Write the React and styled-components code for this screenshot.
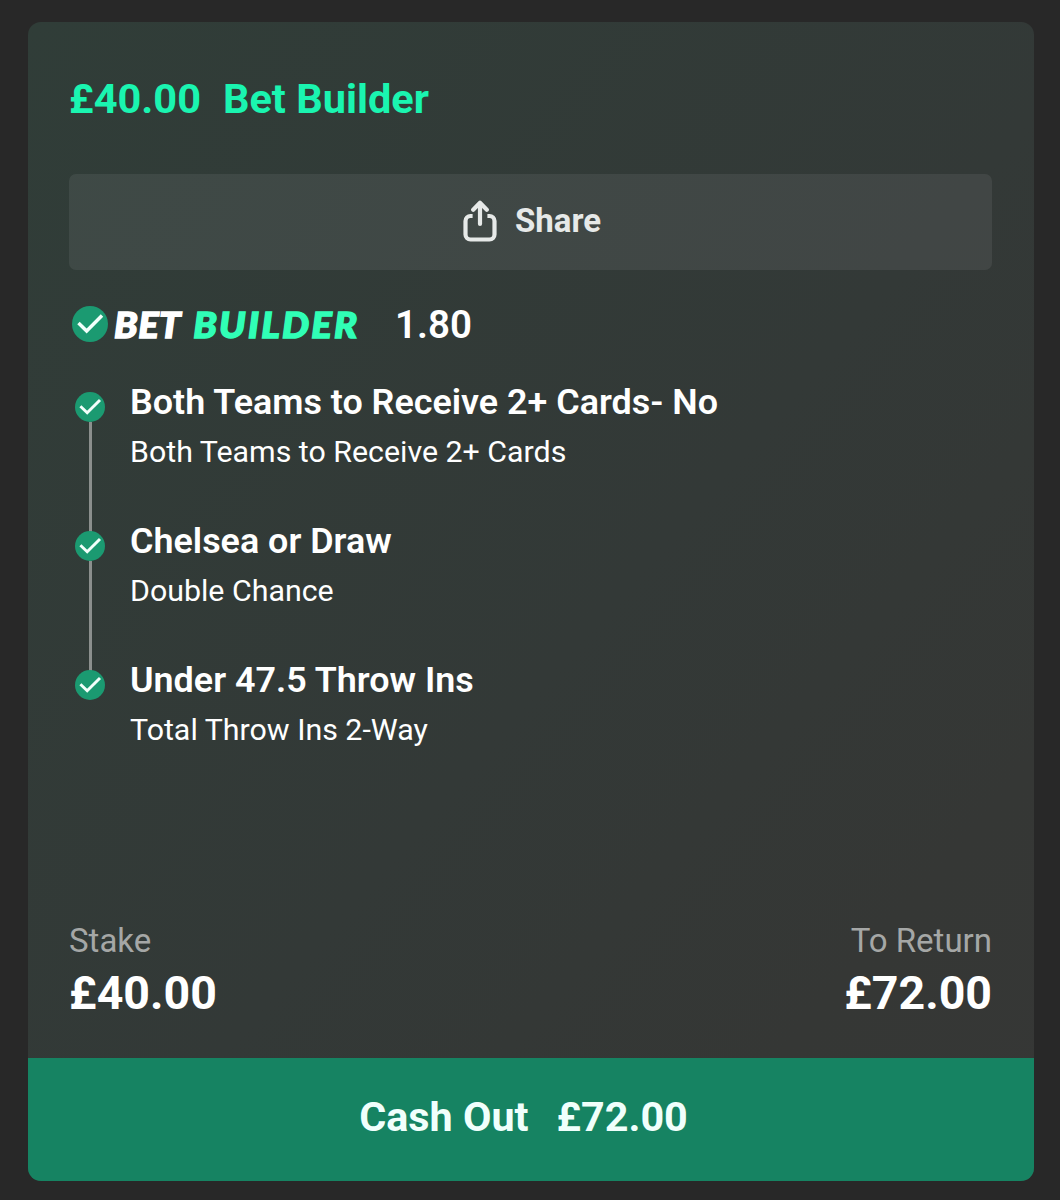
import React from "react";
import styled, { createGlobalStyle } from "styled-components";

const GlobalStyle = createGlobalStyle`
  * { box-sizing: border-box; }
  body {
    margin: 0;
    background: #282828;
    font-family: Roboto, "Liberation Sans", sans-serif;
  }
`;

const Page = styled.main`
  height: 1200px;
  padding: 22px 26.5px 19px 27.5px;
  background: #282828;
`;

const Card = styled.article`
  display: flex;
  flex-direction: column;
  height: 1159px;
  border-radius: 13px;
  overflow: hidden;
  background: linear-gradient(to bottom right, #303d38 0%, #333937 54%, #353735 82%, #363736 100%);
`;

const Body = styled.div`
  flex: 1;
  display: flex;
  flex-direction: column;
  padding: 52px 41.5px 0;
`;

const Heading = styled.h1`
  display: flex;
  gap: 22px;
  margin: 0 0 50px;
  font-size: 41.5px;
  line-height: 50px;
  font-weight: 700;
  color: #1af5b0;
`;

const ShareButton = styled.button`
  display: flex;
  align-items: center;
  justify-content: center;
  gap: 18px;
  flex: none;
  height: 96px;
  padding: 0 0 2px 3px;
  border: 0;
  border-radius: 7px;
  background: rgba(255, 255, 255, 0.07);
  color: #e6e9e8;
  font: 700 33px/40px Roboto, "Liberation Sans", sans-serif;
`;

const ShareIcon = styled.svg`
  display: block;
  width: 34px;
  height: 42px;
`;

const BuilderRow = styled.div`
  display: flex;
  align-items: center;
  height: 40px;
  margin: 34px 0 38px;
  padding-left: 3px;
`;

const Tick = styled.svg`
  display: block;
  flex: none;
  width: ${(p) => p.$size}px;
  height: ${(p) => p.$size}px;
`;

const Logo = styled.span`
  display: flex;
  gap: 11.5px;
  width: 246px;
  margin: 0 35px 0 6px;
  font: italic 900 36.5px/40px Lato, "Open Sans", sans-serif;
  transform: scaleX(1.05);
  transform-origin: left center;
`;

const LogoWord = styled.span`
  color: ${(p) => p.$color};
  letter-spacing: ${(p) => p.$spacing}px;
  -webkit-text-stroke: 1.4px ${(p) => p.$color};
`;

const Odds = styled.span`
  padding-top: 2px;
  font-size: 38.5px;
  line-height: 40px;
  font-weight: 600;
  color: #fff;
`;

const Legs = styled.ul`
  margin: 0;
  padding: 0;
  list-style: none;
`;

const Leg = styled.li`
  display: flex;
  gap: 25px;
  height: 139px;
`;

const Rail = styled.div`
  display: flex;
  flex-direction: column;
  align-items: center;
  width: 30px;
  margin-left: 6px;
  padding-top: 10px;
`;

const Connector = styled.div`
  width: 3px;
  height: 110px;
  flex: none;
  background: #8b8f8d;
`;

const Selection = styled.div`
  font-size: 35.9px;
  line-height: 40px;
  font-weight: 600;
  color: #fff;
  white-space: nowrap;
`;

const Market = styled.div`
  margin-top: 10px;
  font-size: 30.35px;
  line-height: 40px;
  color: #fff;
  white-space: nowrap;
`;

const Totals = styled.div`
  display: flex;
  justify-content: space-between;
  margin: auto 0 36.5px;
`;

const Total = styled.div`
  text-align: ${(p) => p.$align || "left"};
`;

const TotalLabel = styled.div`
  font-size: 33px;
  line-height: 40px;
  color: #a5a7a6;
`;

const TotalValue = styled.div`
  margin-top: 4.5px;
  font-size: 46.5px;
  line-height: 56px;
  font-weight: 700;
  color: #fff;
`;

const CashOut = styled.button`
  display: flex;
  align-items: center;
  justify-content: center;
  gap: 28px;
  flex: none;
  height: 123.5px;
  padding: 0 14px 4px 0;
  border: 0;
  background: #168362;
  color: #f0fffc;
  font: 700 41.3px/50px Roboto, "Liberation Sans", sans-serif;
`;

const legs = [
  ["Both Teams to Receive 2+ Cards- No", "Both Teams to Receive 2+ Cards"],
  ["Chelsea or Draw", "Double Chance"],
  ["Under 47.5 Throw Ins", "Total Throw Ins 2-Way"],
];

function CheckMark({ size }) {
  return (
    <Tick $size={size} viewBox="0 0 30 30" aria-hidden="true">
      <circle cx="15" cy="15" r="15" fill="#1b9a71" />
      <path d="M5.4 14.2 12.2 20.8 25 7.9" fill="none" stroke="#f2fffb" strokeWidth="2.9" />
    </Tick>
  );
}

export default function App() {
  return (
    <>
      <GlobalStyle />
      <Page>
        <Card>
          <Body>
            <Heading>
              <span>£40.00</span>
              <span>Bet Builder</span>
            </Heading>
            <ShareButton>
              <ShareIcon viewBox="0 0 34 42" fill="none" stroke="currentColor" strokeWidth="4.2" strokeLinecap="round" strokeLinejoin="round" aria-hidden="true">
                <path d="M9.6 16H7.5A5 5 0 0 0 2.5 21V34.5A5 5 0 0 0 7.5 39.5H26.5A5 5 0 0 0 31.5 34.5V21A5 5 0 0 0 26.5 16H24.4" strokeLinecap="butt" />
                <path d="M17 24V3.2M10.2 9.7 17 2.8 23.8 9.7" />
              </ShareIcon>
              <span>Share</span>
            </ShareButton>
            <BuilderRow>
              <CheckMark size={36} />
              <Logo>
                <LogoWord $color="#fff" $spacing={0.4}>BET</LogoWord>
                <LogoWord $color="#30ffb6" $spacing={2.1}>BUILDER</LogoWord>
              </Logo>
              <Odds>1.80</Odds>
            </BuilderRow>
            <Legs>
              {legs.map(([selection, market], i) => (
                <Leg key={selection}>
                  <Rail>
                    <CheckMark size={30} />
                    {i < legs.length - 1 && <Connector />}
                  </Rail>
                  <div>
                    <Selection>{selection}</Selection>
                    <Market>{market}</Market>
                  </div>
                </Leg>
              ))}
            </Legs>
            <Totals>
              <Total>
                <TotalLabel>Stake</TotalLabel>
                <TotalValue>£40.00</TotalValue>
              </Total>
              <Total $align="right">
                <TotalLabel>To Return</TotalLabel>
                <TotalValue>£72.00</TotalValue>
              </Total>
            </Totals>
          </Body>
          <CashOut>
            <span>Cash Out</span>
            <span>£72.00</span>
          </CashOut>
        </Card>
      </Page>
    </>
  );
}
